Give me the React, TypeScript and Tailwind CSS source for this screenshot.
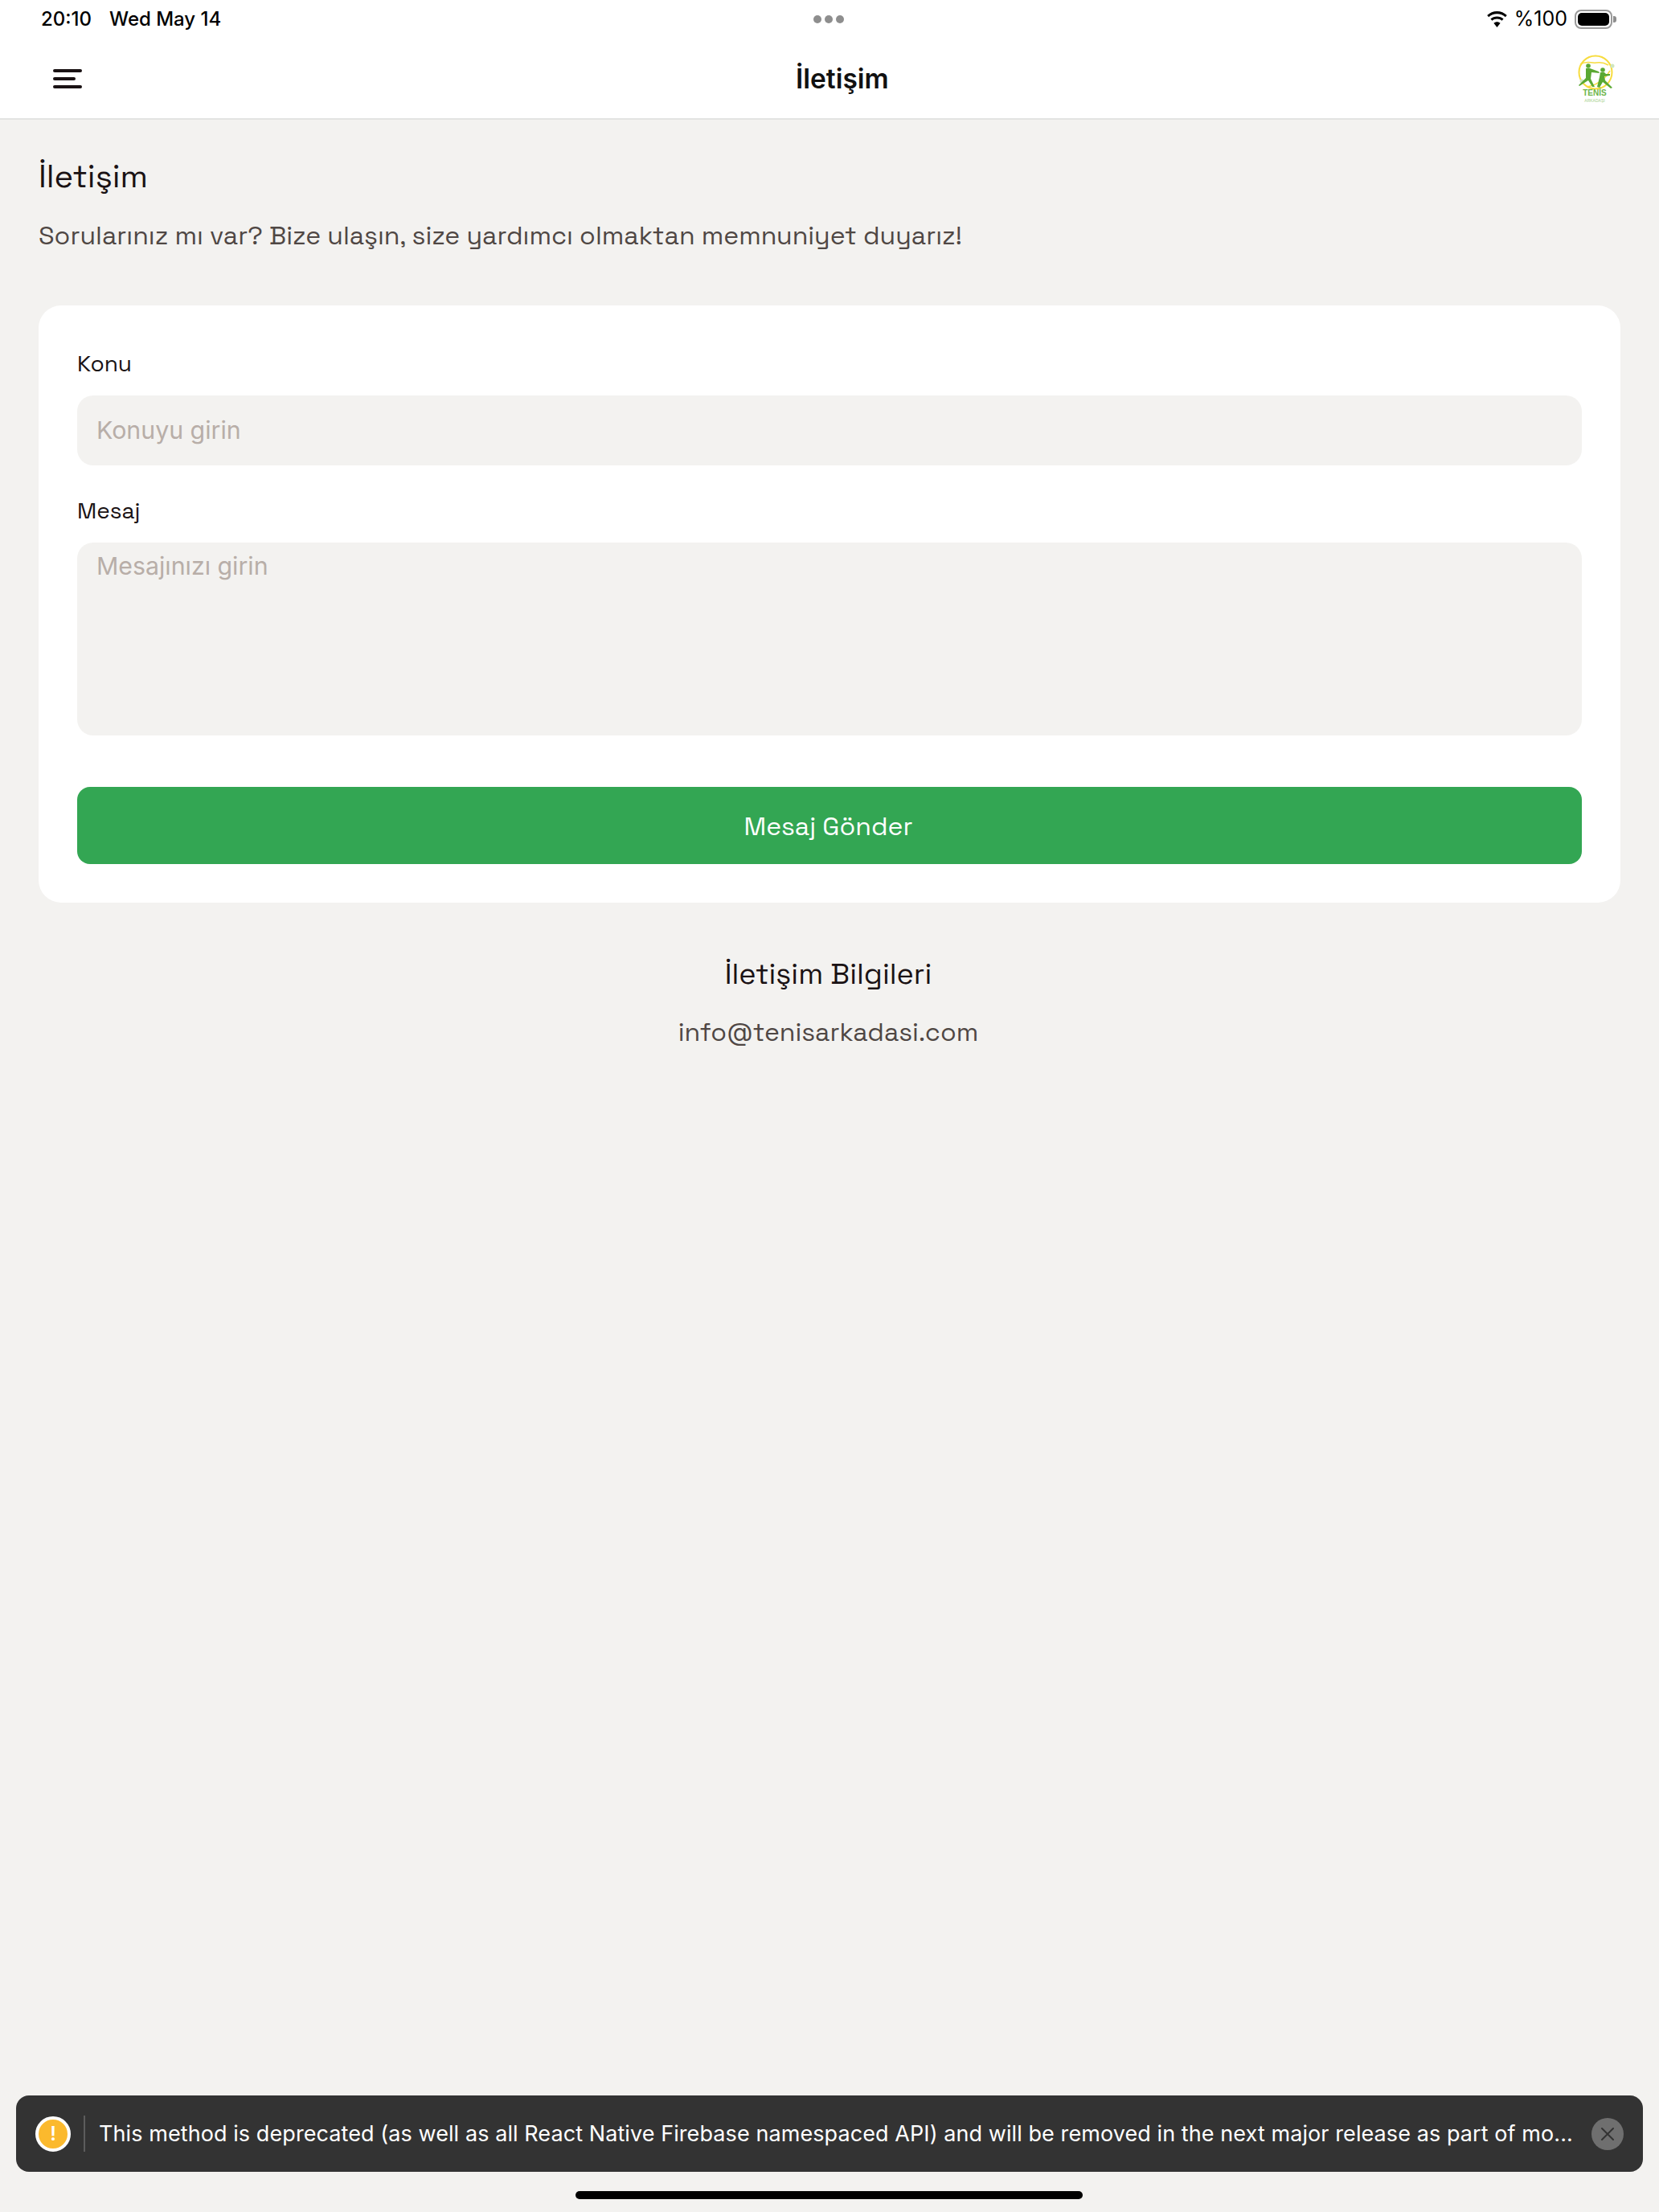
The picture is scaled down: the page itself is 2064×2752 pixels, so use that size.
const body = '"Space Grotesk", Lato, "Open Sans", sans-serif';

function Logo() {
  return (
    <svg className="w-[50px] h-[62px] mt-[3px]" viewBox="0 0 50 62">
      <circle cx="25" cy="22" r="20.5" fill="none" stroke="#f7dc3e" strokeWidth="2" />
      <path d="M6 12c8-5 14-1 20-2s10 0 15 3M14 40c10-1 22-8 29-20" fill="none" stroke="#f7dc3e" strokeWidth="1.5" />
      <circle cx="46" cy="14" r="2.500" fill="#cfe6c0" />
      <circle cx="8" cy="33" r="2.500" fill="#cfe6c0" />
      <circle cx="16" cy="14" r="2.800" fill="#5aa832" />
      <path d="M13 17l5 0 11 4 1 2-10-1-1 8 5 10-3 0-5-8-11 7-1-1 9-9z" fill="#5aa832" />
      <circle cx="34" cy="19" r="2.800" fill="#5aa832" />
      <path d="M31 22l5 0 2 2 5 0 0 2-7 1 1 5 9 9-2 1-10-8-4 7-3-1 3-12z" fill="#5aa832" />
      <text x="24" y="51" textAnchor="middle" fontSize="10" fontWeight="700" fill="#6cb54a" fontFamily="Liberation Sans, sans-serif">TENİS</text>
      <text x="24" y="59" textAnchor="middle" fontSize="5" fill="#a5d08e" fontFamily="Liberation Sans, sans-serif">ARKADAŞI</text>
    </svg>
  );
}

export default function App() {
  return (
    <div className="relative w-[2064px] h-[2752px] overflow-hidden bg-[#f3f2f0] font-['Inter',sans-serif]">
      {/* top bars */}
      <div className="bg-white h-[149px] border-b-2 border-[#e3e3e2] flex flex-col">
        <div className="h-[48px] pl-[51px] pr-[53px] flex items-center justify-between text-black">
          <div className="flex gap-[22px] text-[24px] font-medium w-[400px]">
            <span>20:10</span>
            <span>Wed May 14</span>
          </div>
          <div className="flex gap-[4px]">
            <span className="w-[10px] h-[10px] rounded-full bg-[#8e8e8e]" />
            <span className="w-[10px] h-[10px] rounded-full bg-[#8e8e8e]" />
            <span className="w-[10px] h-[10px] rounded-full bg-[#8e8e8e]" />
          </div>
          <div className="flex items-center justify-end gap-[7px] w-[400px] text-[25px]">
            <svg className="w-[29px] h-[20px]" viewBox="0 0 29 20" fill="black">
              <path d="M14.5 3.2c4 0 7.6 1.5 10.3 4l2-2.2C23.500 1.900 19.200 0 14.500 0S5.500 1.900 2.200 5l2 2.200c2.700-2.500 6.300-4 10.300-4z" />
              <path d="M14.500 9.500c2.300 0 4.400.9 6 2.300l2.100-2.200c-2.100-1.900-5-3.100-8.100-3.100s-6 1.200-8.100 3.100l2.100 2.200c1.600-1.400 3.700-2.300 6-2.300z" />
              <path d="M14.500 20l4.100-5.200c-1.100-.9-2.500-1.500-4.100-1.500s-3 .6-4.100 1.500z" />
            </svg>
            <span>%100</span>
            <div className="flex items-center ml-[2px]">
              <div className="w-[47px] h-[24px] rounded-[8px] border-2 border-[#9a9a9a] p-[2px]">
                <div className="w-full h-full bg-black rounded-[5px]" />
              </div>
              <div className="w-[4px] h-[8px] bg-[#8e8e8e] rounded-r-[3px] ml-[1px]" />
            </div>
          </div>
        </div>
        <div className="relative flex-1 flex items-center justify-between pl-[66px] pr-[54px]">
          <svg className="w-[36px] h-[24px]" viewBox="0 0 36 24" fill="#1a1214">
            <rect x="0" y="0" width="36" height="4" rx="2" />
            <rect x="0" y="10" width="28" height="4" rx="2" />
            <rect x="0" y="20" width="36" height="4" rx="2" />
          </svg>
          <span className="absolute left-[990px] top-[25px] text-[33.500px] leading-[50px] font-semibold text-[#111]">İletişim</span>
          <Logo />
        </div>
      </div>

      {/* page content */}
      <div className="px-[48px]">
        <h1 className="mt-[44px] text-[40px] leading-[54px] text-[#1a1214]" style={{ fontFamily: body }}>İletişim</h1>
        <p className="mt-[22px] text-[32px] leading-[48px] text-[#4f4744]" style={{ fontFamily: body }}>
          Sorularınız mı var? Bize ulaşın, size yardımcı olmaktan memnuniyet duyarız!
        </p>

        <div className="mt-[63px] bg-white rounded-[28px] p-[48px] h-[743px]">
          <label className="block text-[28px] leading-[40px] text-[#1a1214] mt-[4px]" style={{ fontFamily: body }}>Konu</label>
          <input
            className="block mt-[20px] w-full h-[87px] rounded-[20px] bg-[#f3f2f0] px-[24px] pb-[2px] text-[30.300px] outline-none placeholder:text-[#b8aea8]"
            placeholder="Konuyu girin"
          />
          <label className="block mt-[36px] text-[28px] leading-[40px] text-[#1a1214]" style={{ fontFamily: body }}>Mesaj</label>
          <textarea
            className="block mt-[20px] w-full h-[240px] rounded-[20px] bg-[#f3f2f0] px-[24px] py-[9px] text-[30.300px] leading-[40px] outline-none resize-none placeholder:text-[#b8aea8]"
            placeholder="Mesajınızı girin"
          />
          <button className="mt-[64px] w-full h-[96px] rounded-[16px] bg-[#33a653] text-white text-[32px] pr-[3px] pt-[2px]" style={{ fontFamily: body }}>
            Mesaj Gönder
          </button>
        </div>

        <div className="mt-[65px] pr-[3px] flex flex-col items-center">
          <h2 className="text-[36px] leading-[48px] text-[#1a1214]" style={{ fontFamily: body }}>İletişim Bilgileri</h2>
          <p className="mt-[24px] text-[32px] leading-[48px] text-[#4f4744]" style={{ fontFamily: body }}>info@tenisarkadasi.com</p>
        </div>
      </div>

      {/* deprecation toast */}
      <div className="absolute left-[20px] right-[20px] top-[2607px] h-[95px] rounded-[16px] bg-[#333333] flex items-center pl-[24px] pr-[24px]">
        <div className="w-[44px] h-[44px] rounded-full bg-[#fbb92d] border-[4px] border-white flex items-center justify-center text-white text-[24px] font-semibold leading-none">!</div>
        <div className="w-[2px] h-[45px] bg-[#5c5c5c] ml-[16px]" />
        <span className="ml-[17px] pt-[2px] flex-1 min-w-0 text-[27px] tracking-[0.08px] text-white whitespace-nowrap">
          This method is deprecated (as well as all React Native Firebase namespaced API) and will be removed in the next major release as part of mo...
        </span>
        <div className="w-[40px] h-[40px] rounded-full bg-[#6f6f6f] flex items-center justify-center">
          <svg className="w-[18px] h-[18px]" viewBox="0 0 18 18" stroke="#333" strokeWidth="2" strokeLinecap="round">
            <path d="M2 2l14 14M16 2L2 16" />
          </svg>
        </div>
      </div>

      {/* home indicator */}
      <div className="absolute left-[716px] top-[2726px] w-[631px] h-[10px] rounded-full bg-black" />
    </div>
  );
}
